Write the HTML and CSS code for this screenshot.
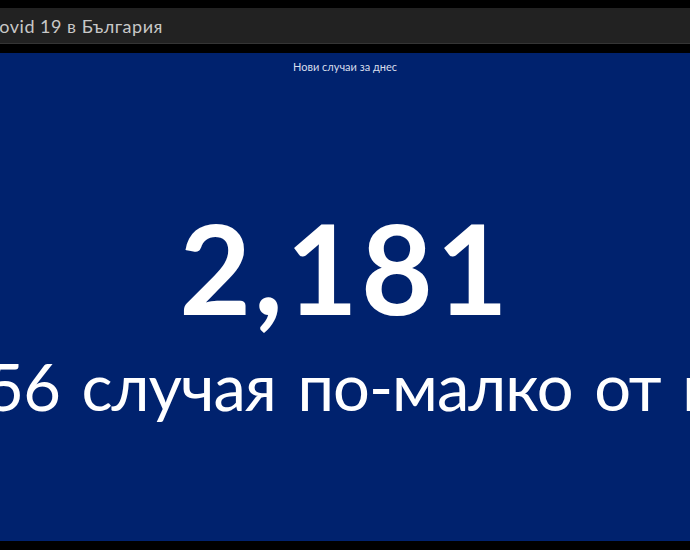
FILE: index.html
```html
<!DOCTYPE html>
<html lang="bg">
<head>
<meta charset="utf-8">
<title>Covid 19 в България</title>
<link rel="stylesheet" href="styles.css">
</head>
<body>
<header class="topbar">
  <div class="title">Covid 19 в България</div>
</header>
<main class="panel">
  <div class="panel-title">Нови случаи за днес</div>
  <div class="indicator">
    <div class="value">2,181</div>
    <div class="bottom">с 156 случая по-малко от вчера</div>
  </div>
</main>
</body>
</html>
```
FILE: styles.css
```css
html, body {
  margin: 0;
  padding: 0;
  background: #000;
  height: 100%;
  overflow: hidden;
}
body {
  font-family: Lato, "Noto Sans", sans-serif;
  padding-top: 8px;
  box-sizing: border-box;
}
.topbar {
  height: 35px;
  background: #222222;
  border-bottom: 1px solid #353535;
  display: flex;
  align-items: center;
  overflow: hidden;
}
.title {
  color: #c8c8c8;
  font-size: 18px;
  letter-spacing: 0.5px;
  white-space: nowrap;
  margin-left: -13px;
}
.panel {
  margin-top: 9px;
  height: 488px;
  background: #00226e;
  display: flex;
  flex-direction: column;
  align-items: center;
  overflow: hidden;
}
.panel-title {
  color: #d8deec;
  font-size: 11px;
  line-height: 14px;
  margin-top: 7px;
}
.indicator {
  flex: 1;
  display: flex;
  flex-direction: column;
  align-items: center;
  justify-content: center;
  width: 100%;
  padding-top: 10px;
  box-sizing: border-box;
}
.value {
  color: #fff;
  font-size: 124px;
  font-weight: 700;
  letter-spacing: 3px;
  line-height: 124px;
  white-space: nowrap;
}
.bottom {
  color: #fff;
  font-size: 65px;
  letter-spacing: -1px;
  word-spacing: 6px;
  line-height: 70px;
  margin-top: 22px;
  margin-left: 54px;
  white-space: nowrap;
}
```
